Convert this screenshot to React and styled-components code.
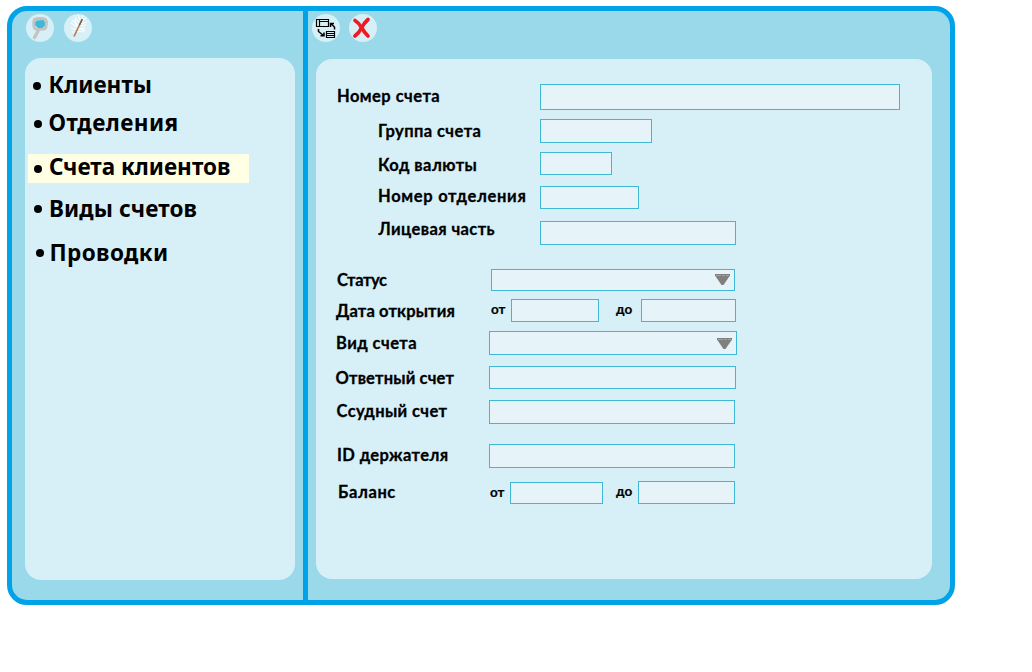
import React from "react";
import styled, { createGlobalStyle } from "styled-components";

const GlobalStyle = createGlobalStyle`
  *, *::before, *::after { box-sizing: border-box; }
  body { margin: 0; background: #fff; color: #000; }
`;

const Window = styled.div`
  display: flex;
  width: 948px;
  height: 599px;
  margin: 6px 0 0 7px;
  border: 5px solid #00a2e8;
  border-radius: 20px;
  background: #99d9ea;
`;

const Sidebar = styled.aside`
  display: flex;
  flex-direction: column;
  width: 296px;
  padding-left: 13px;
  border-right: 5px solid #00a2e8;
`;

const Main = styled.main`
  display: flex;
  flex-direction: column;
  flex: 1;
  padding-left: 8px;
`;

const Toolbar = styled.div`
  display: flex;
  gap: ${(p) => p.$gap}px;
  padding-top: 3px;
  margin-left: ${(p) => p.$shift}px;
  height: ${(p) => p.$height}px;
`;

const ToolButton = styled.button`
  width: 28px;
  height: 28px;
  padding: 0;
  border: 0;
  border-radius: 50%;
  background: #d7eff7;

  svg { display: block; }
`;

const NavPanel = styled.nav`
  width: 270px;
  height: 522px;
  padding: 12px 0 0 3px;
  border-radius: 16px;
  background: #d7eff7;
`;

const NavItem = styled.a`
  display: flex;
  width: 221px;
  height: ${(p) => (p.$selected ? 29 : 28)}px;
  margin-bottom: ${(p) => p.$after}px;
  padding-left: ${(p) => p.$indent}px;
  background: ${(p) => (p.$selected ? "#ffffe6" : "transparent")};
  font: 700 22.5px/${(p) => (p.$selected ? 26 : 30)}px "Noto Sans", sans-serif;
  letter-spacing: ${(p) => p.$track}px;
  white-space: nowrap;
`;

const Bullet = styled.span`
  flex: none;
  width: 8px;
  height: 8px;
  margin: ${(p) => p.$top}px ${(p) => p.$gap}px 0 0;
  border-radius: 4px;
  background: #000;
`;

const FormPanel = styled.form`
  width: 616px;
  height: 520px;
  padding-top: 25px;
  border-radius: 16px;
  background: #d7eff7;
`;

const Row = styled.div`
  display: flex;
  align-items: flex-start;
  height: ${(p) => p.$height}px;
  margin-bottom: ${(p) => p.$after}px;
`;

const Label = styled.label`
  flex: none;
  width: ${(p) => p.$width}px;
  margin-top: ${(p) => p.$top}px;
  padding-left: ${(p) => p.$indent}px;
  font: 700 16.5px/20px Lato, sans-serif;
  letter-spacing: ${(p) => p.$track}px;
  -webkit-text-stroke: 0.3px #000;
  white-space: nowrap;
`;

const RangeWord = styled.span`
  flex: none;
  width: ${(p) => p.$width}px;
  margin-top: ${(p) => p.$top}px;
  padding-left: ${(p) => p.$indent}px;
  font: 700 13.5px/20px Lato, sans-serif;
  -webkit-text-stroke: 0.2px #000;
`;

const Field = styled.div`
  display: flex;
  justify-content: flex-end;
  flex: none;
  width: ${(p) => p.$width}px;
  height: ${(p) => p.$height}px;
  margin-top: ${(p) => p.$top || 0}px;
  padding: ${(p) => p.$arrowTop || 0}px 4px 0 0;
  border: 1px solid #3fb8d6;
  background: #e6f4fa;
`;

const Arrow = () => (
  <svg width="15" height="12" viewBox="0 0 15 12">
    <path d="M0 0H15V1.5L8.5 11H6.5L0 1.5Z" fill="#7f7f7f" />
    <path d="M1 1.5H14" stroke="#a3a3a3" strokeWidth="1" strokeDasharray="5 1 3 1" />
  </svg>
);

const SearchIcon = () => (
  <svg width="28" height="28" viewBox="0 0 28 28" fill="none">
    <path d="M12 17L8.5 23.5" stroke="#c3c3c3" strokeWidth="3.4" strokeLinecap="round" />
    <path d="M9 5.2Q14 3.8 19 5.2Q21 6.5 20.3 11Q19.8 15 17.5 15.2L10.5 15.4Q7.8 14.8 7.7 10Q7.6 6 9 5.2Z" fill="#d7eff7" stroke="#c3c3c3" strokeWidth="2.8" />
    <path d="M10.5 6.5L17.3 6L19 8L18.8 12L16.5 14H12L9.2 11.5V8Z" fill="#3fb8d6" />
  </svg>
);

const BrushIcon = () => (
  <svg width="28" height="28" viewBox="0 0 28 28" fill="none">
    <g stroke="#fff" strokeWidth="1.2">
      <path d="M14 14L7 9M15 12L8 6M16 10L11 3M17 8L14 1M13 16L7 14M12 18L8 18M18 6L19 1" />
      <path d="M13 17L20 18M14 15L21 14M15 12L22 11M16 10L23 8M17 7L22 4M15 14L21 17M9 11L15 13M11 5L12 11" />
    </g>
    <path d="M18.3 5L10 22.5" stroke="#b97a57" strokeWidth="1.7" />
    <path d="M18.3 5L15.5 11" stroke="#6b5750" strokeWidth="1.2" />
  </svg>
);

const TransferIcon = () => (
  <svg width="28" height="28" viewBox="0 0 28 28" fill="none" stroke="#000" strokeWidth="1.2">
    <path d="M4.5 5.5H16.5V12.5H4.5ZM7.5 5.5V12.5M7.5 7.5H16.5M14.5 17.5H22.5V23.5H14.5ZM14.5 19.5H22.5M14.5 21.5H22.5" />
    <path d="M22.5 15.5V13L19 9.8M18.5 13V9.5H22" strokeWidth="1.5" />
    <path d="M6.5 15V17.5L11.5 21.5M8.5 21.7H12V18.5" strokeWidth="1.5" />
  </svg>
);

const CloseIcon = () => (
  <svg width="28" height="28" viewBox="0 0 28 28" fill="none" stroke="#ed1c24" strokeLinecap="round">
    <path d="M6 6.5Q10 9 12.5 13.5T19 22" strokeWidth="3.7" />
    <path d="M19 5.5Q15 9 12.5 14T5.9 22" strokeWidth="3.7" />
  </svg>
);

const sections = [
  { name: "Клиенты", after: 10, indent: 5, top: 12, gap: 7.5, track: 0.05 },
  { name: "Отделения", after: 18, indent: 5.5, top: 12, gap: 7, track: 0.45 },
  { name: "Счета клиентов", after: 11, indent: 6, top: 11, gap: 7, track: 0, selected: true },
  { name: "Виды счетов", after: 16, indent: 6, top: 11, gap: 7, track: 0.1 },
  { name: "Проводки", after: 0, indent: 7.5, top: 11, gap: 6, track: 0.4 },
];

const rows = [
  { label: "Номер счета", indent: 21, track: 0.45, top: 2, col: 224, width: 360, height: 26, after: 9 },
  { label: "Группа счета", indent: 62, track: 0.42, top: 2, col: 224, width: 112, height: 24, after: 9 },
  { label: "Код валюты", indent: 62, track: 0.45, top: 3, col: 224, width: 72, height: 23, after: 11 },
  { label: "Номер отделения", indent: 62, track: 0.7, top: 0, col: 224, width: 99, height: 23, after: 12 },
  { label: "Лицевая часть", indent: 62.5, track: 0.4, top: -2, col: 224, width: 196, height: 24, after: 24 },
  { label: "Статус", indent: 21, track: -0.4, top: 1, col: 175, width: 244, height: 22, after: 8, arrowTop: 4 },
  { label: "Дата открытия", indent: 20, track: 0.15, top: 2, col: 175, height: 23, after: 9,
    range: { first: [20, 0, 0], from: 88, second: [42, 17, 0], to: 95, toHeight: 23, toTop: 0 } },
  { label: "Вид счета", indent: 20, track: 0.45, top: 2, col: 173, width: 248, height: 24, after: 11, arrowTop: 6 },
  { label: "Ответный счет", indent: 19.5, track: 0.17, top: 2, col: 173, width: 247, height: 23, after: 11 },
  { label: "Ссудный счет", indent: 20.5, track: 0.4, top: 1, col: 173, width: 246, height: 24, after: 20 },
  { label: "ID держателя", indent: 21, track: 0.4, top: 1, col: 173, width: 246, height: 24, after: 14 },
  { label: "Баланс", indent: 22, track: 0.6, top: 0, col: 174, height: 22, after: 0,
    range: { first: [20, 0, 0], from: 93, second: [35, 13, -1], to: 97, toHeight: 23, toTop: -1 } },
];

const Range = ({ range, height }) => (
  <>
    <RangeWord $width={range.first[0]} $indent={range.first[1]} $top={range.first[2]}>от</RangeWord>
    <Field $width={range.from} $height={height} />
    <RangeWord $width={range.second[0]} $indent={range.second[1]} $top={range.second[2]}>до</RangeWord>
    <Field $width={range.to} $height={range.toHeight} $top={range.toTop} />
  </>
);

export default function App() {
  return (
    <>
      <GlobalStyle />
      <Window>
        <Sidebar>
          <Toolbar $gap={10} $shift={1} $height={47}>
            <ToolButton><SearchIcon /></ToolButton>
            <ToolButton><BrushIcon /></ToolButton>
          </Toolbar>
          <NavPanel>
            {sections.map((s) => (
              <NavItem key={s.name} $after={s.after} $indent={s.indent} $track={s.track} $selected={s.selected}>
                <Bullet $top={s.top} $gap={s.gap} />
                {s.name}
              </NavItem>
            ))}
          </NavPanel>
        </Sidebar>
        <Main>
          <Toolbar $gap={9} $shift={-4} $height={48}>
            <ToolButton><TransferIcon /></ToolButton>
            <ToolButton><CloseIcon /></ToolButton>
          </Toolbar>
          <FormPanel>
            {rows.map((r) => (
              <Row key={r.label} $height={r.height} $after={r.after}>
                <Label $width={r.col} $indent={r.indent} $top={r.top} $track={r.track}>{r.label}</Label>
                {r.range ? (
                  <Range range={r.range} height={r.height} />
                ) : (
                  <Field $width={r.width} $height={r.height} $arrowTop={r.arrowTop}>
                    {r.arrowTop && <Arrow />}
                  </Field>
                )}
              </Row>
            ))}
          </FormPanel>
        </Main>
      </Window>
    </>
  );
}
